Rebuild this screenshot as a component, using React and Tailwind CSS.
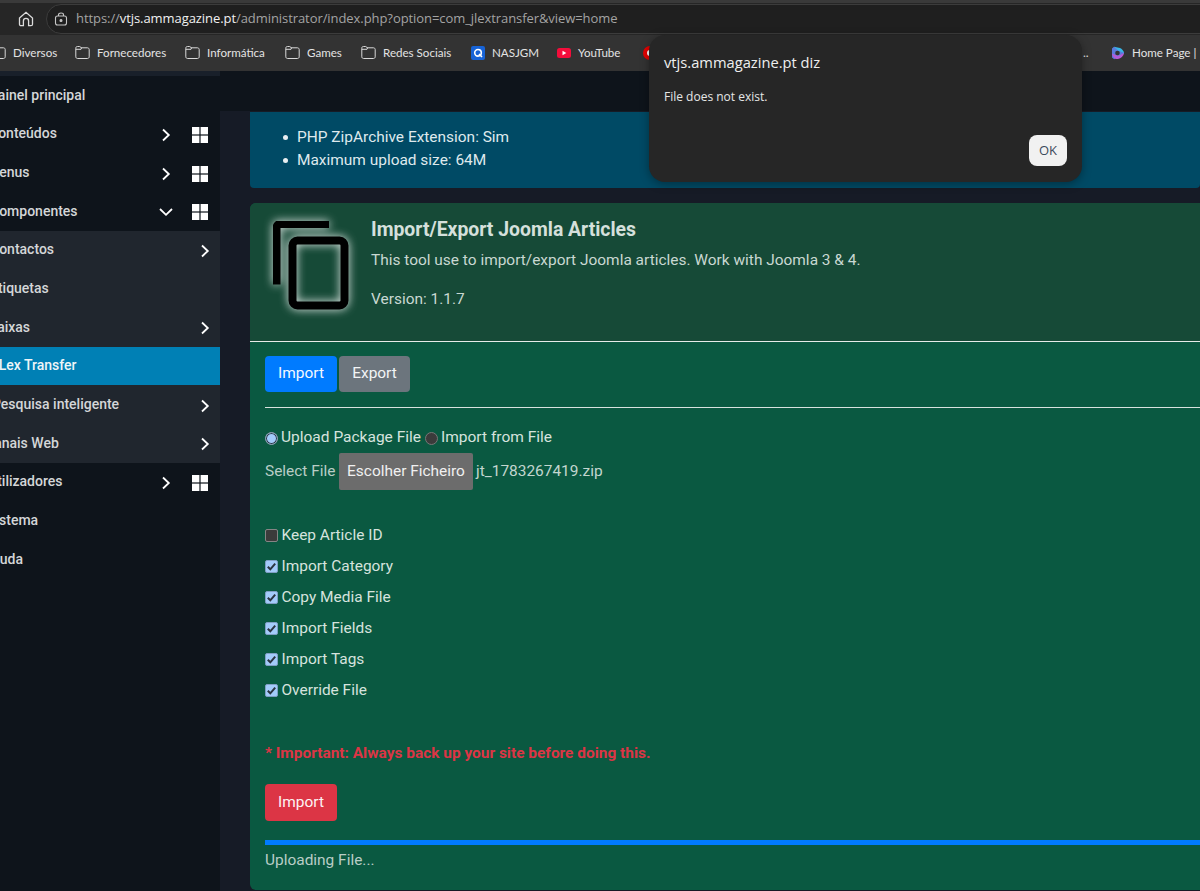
import React from "react";

const Folder = () => (
  <svg width="15" height="15" viewBox="0 0 15 15" fill="none" stroke="#d9d9d9" strokeWidth="1" className="shrink-0">
    <path d="M.8 3.300C.8 2 1.400 1.500 2.400 1.500h2.300c.7 0 1 .6 1.300 1.300h6.400c1 0 1.800.7 1.800 1.700v7.300c0 1-.8 1.700-1.800 1.700H2.600c-1 0-1.800-.7-1.800-1.700z" />
    <path d="M.8 4.300H6l.6-1.500" />
  </svg>
);

const GridIcon = () => (
  <svg width="16" height="16" viewBox="0 0 16 16" fill="#fff" className="shrink-0">
    <rect x="0" y="0" width="7.400" height="7.400" />
    <rect x="8.600" y="0" width="7.400" height="7.400" />
    <rect x="0" y="8.600" width="7.400" height="7.400" />
    <rect x="8.600" y="8.600" width="7.400" height="7.400" />
  </svg>
);

const ChevronRight = () => (
  <svg width="10" height="14" viewBox="0 0 10 14" fill="none" stroke="#fff" strokeWidth="1.800" className="shrink-0">
    <path d="M2 1.500 7.800 7 2 12.500" />
  </svg>
);

const ChevronDown = () => (
  <svg width="14" height="10" viewBox="0 0 14 10" fill="none" stroke="#fff" strokeWidth="1.800" className="shrink-0">
    <path d="M1 2 7 7.800 13 2" />
  </svg>
);

function Row({ label, shift, kind, sub, active }) {
  const bg = active ? "bg-[#0080b5]" : sub ? "bg-[#20262e]" : "";
  return (
    <div className={`h-[38.67px] flex items-center ${bg}`}>
      <span
        className={`flex-1 whitespace-nowrap text-[14px] font-medium ${active ? "text-[#eef5f8]" : "text-[#d4d6d8]"}`}
        style={{ marginLeft: shift }}
      >
        {label}
      </span>
      {kind === "sub" && (
        <div className="mr-[10px] pt-[2px]">
          <ChevronRight />
        </div>
      )}
    </div>
  );
}

function ParentRow({ label, shift, open }) {
  return (
    <div className="h-[38.67px] flex items-center">
      <span className="flex-1 whitespace-nowrap text-[14px] font-medium text-[#d4d6d8]" style={{ marginLeft: shift }}>
        {label}
      </span>
      <div className="w-[14px] flex justify-center mr-[19px] pt-[2px]">{open ? <ChevronDown /> : <ChevronRight />}</div>
      <div className="mr-[12px] pt-[2px]">
        <GridIcon />
      </div>
    </div>
  );
}

function Checkbox({ checked }) {
  return checked ? (
    <span className="w-[13px] h-[13px] rounded-[2px] bg-[#a3cbfa] border border-[#7f9ec4] flex items-center justify-center shrink-0">
      <svg width="11" height="11" viewBox="0 0 11 11" fill="none" stroke="#2b3440" strokeWidth="2">
        <path d="M1.800 5.800 4.300 8.300 9.200 2.600" />
      </svg>
    </span>
  ) : (
    <span className="w-[13px] h-[13px] rounded-[2px] bg-[#3b3b3b] border border-[#858585] shrink-0" />
  );
}

function CheckRow({ label, checked }) {
  return (
    <div className="h-[31px] flex items-center gap-[3.500px] text-[15.45px] text-[#d6e3de]">
      <Checkbox checked={checked} />
      <span>{label}</span>
    </div>
  );
}

function Bookmark({ w, icon, label }) {
  return (
    <div className="flex items-center gap-[7px] shrink-0" style={{ width: w }}>
      {icon}
      <span className="text-[11.6px] text-[#e3e3e3] whitespace-nowrap">{label}</span>
    </div>
  );
}

export default function App() {
  return (
    <div className="relative w-[1200px] h-[891px] overflow-hidden bg-[#161b26] font-['Roboto',sans-serif]">
      {/* Browser chrome */}
      <div className="h-[35px] bg-[#262626] border-t-[3px] border-[#3a3a3a] flex items-center pl-[18px] gap-[10px] font-['Open_Sans',sans-serif]">
        <svg width="16" height="16" viewBox="0 0 16 16" fill="none" stroke="#dcdcdc" strokeWidth="1.300" className="shrink-0 mr-[2px]">
          <path d="M1.500 7 8 1.300 14.500 7v6.200c0 .9-.6 1.500-1.500 1.500h-2.400V10c0-1.500-1-2.600-2.600-2.600S5.400 8.500 5.400 10v4.700H3c-.9 0-1.500-.6-1.500-1.500z" />
        </svg>
        <div className="flex-1 h-[30px] -mr-[40px] rounded-full bg-[#1f1f1f] border border-[#3c3c3c] flex items-center pl-[7px] gap-[8px]">
          <svg width="14" height="14" viewBox="0 0 14 14" fill="none" stroke="#c6c6c6" strokeWidth="1.100" className="shrink-0">
            <rect x="1.500" y="4" width="11" height="9" rx="2" />
            <path d="M4.500 4V2.800C4.500 1.600 5.500 1 7 1s2.500.6 2.500 1.800V4" />
            <circle cx="7" cy="8.500" r="1" fill="#c6c6c6" />
          </svg>
          <span className="text-[13px] whitespace-nowrap tracking-[-0.07px] text-[#a3a3a3]">
            https://<span className="text-[#f1f1f1]">vtjs.ammagazine.pt</span>/administrator/index.php?option=com_jlextransfer&amp;view=home
          </span>
        </div>
      </div>
      <div className="h-[36px] bg-[#333333] flex items-center -ml-[9px] font-['Lato',sans-serif] overflow-hidden">
        <Bookmark w={84} icon={<Folder />} label="Diversos" />
        <Bookmark w={110} icon={<Folder />} label="Fornecedores" />
        <Bookmark w={100} icon={<Folder />} label="Informática" />
        <Bookmark w={76} icon={<Folder />} label="Games" />
        <Bookmark w={110} icon={<Folder />} label="Redes Sociais" />
        <Bookmark
          w={86}
          label="NASJGM"
          icon={
            <svg width="14" height="14" viewBox="0 0 14 14" className="shrink-0">
              <rect width="14" height="14" rx="2" fill="#1763d6" />
              <circle cx="7" cy="6.800" r="3.300" fill="none" stroke="#fff" strokeWidth="1.600" />
              <path d="M8 8l3 3" stroke="#fff" strokeWidth="1.600" />
            </svg>
          }
        />
        <Bookmark
          w={86}
          label="YouTube"
          icon={
            <svg width="14" height="14" viewBox="0 0 14 14" className="shrink-0">
              <rect y="2" width="14" height="10" rx="2.500" fill="#f40d3b" />
              <path d="M5.500 4.800v4.400L9.300 7z" fill="#fff" />
            </svg>
          }
        />
        <div className="w-[440px] shrink-0">
          <svg width="14" height="14" viewBox="0 0 14 14">
            <circle cx="7" cy="7" r="7" fill="#e60000" />
            <circle cx="7" cy="7" r="3" fill="#fff" />
          </svg>
        </div>
        <span className="w-[28px] shrink-0 text-[12px] text-[#e3e3e3]">..</span>
        <Bookmark
          w={120}
          label="Home Page |"
          icon={
            <svg width="14" height="14" viewBox="0 0 14 14" className="shrink-0">
              <path d="M3 .8 12.800 6 13 8 3.200 13.300 1 11.500V2.500z" fill="#5b7bdc" />
              <path d="M3 .8 9 2c2 1 3.500 2.500 4 5L7 4.500z" fill="#38b6e8" />
              <path d="M1 7.500 7 10l6-3c-.5 3-3 5.500-6 6-2.500.5-5.500-2-6-5.500z" fill="#b45bd6" />
              <circle cx="6.500" cy="7" r="2.300" fill="#333" />
            </svg>
          }
        />
      </div>

      <div className="flex h-[820px]">
        {/* Sidebar */}
        <aside className="w-[220px] shrink-0 bg-[#0e141b] overflow-hidden">
          <div className="h-[5px] bg-[#19202a]" />
          <Row label="Painel principal" shift={-11} />
          <ParentRow label="Conteúdos" shift={-11} />
          <ParentRow label="Menus" shift={-13} />
          <ParentRow open label="Componentes" shift={-10} />
          <Row sub kind="sub" label="Contactos" shift={-10} />
          <Row sub label="Etiquetas" shift={-10} />
          <Row sub kind="sub" label="Caixas" shift={-12} />
          <Row active label="JLex Transfer" shift={-9} />
          <Row sub kind="sub" label="Pesquisa inteligente" shift={-8} />
          <Row sub kind="sub" label="Canais Web" shift={-15} />
          <ParentRow label="Utilizadores" shift={-12} />
          <Row label="Sistema" shift={-13} />
          <Row label="Ajuda" shift={-13} />
        </aside>

        {/* Main */}
        <main className="flex-1 min-w-0">
          <div className="h-[40px] bg-[#0e141b]" />
          <div className="pl-[30px] pt-[1px]">
            <div className="h-[76px] rounded-b-[4px] bg-[#004a65] pl-[47px] pt-[14px] text-[15.45px] leading-[23px] text-[#dfe9ed]">
              <ul>
                <li className="relative before:content-[''] before:absolute before:-left-[14px] before:top-[9px] before:w-[5px] before:h-[5px] before:rounded-full before:bg-[#e8eef1]">
                  PHP ZipArchive Extension: Sim
                </li>
                <li className="relative before:content-[''] before:absolute before:-left-[14px] before:top-[9px] before:w-[5px] before:h-[5px] before:rounded-full before:bg-[#e8eef1]">
                  Maximum upload size: 64M
                </li>
              </ul>
            </div>

            <section className="mt-[15px] h-[687px] rounded-l-[6px] overflow-hidden bg-[#0a5941]">
              <header className="h-[138px] bg-[#164a37] flex border-b border-[#e6ebe9] box-content">
                <div className="w-[121px] shrink-0 pl-[23px] pt-[18px]">
                  <svg width="76" height="90" viewBox="0 0 76 90" fill="none" className="drop-shadow-[0_0_5px_rgba(255,255,255,0.9)]">
                    <path d="M56 3.500H7.500C5 3.500 3.500 5 3.500 7.500V64" stroke="#000" strokeWidth="8" transform="translate(0 -0.500)" />
                    <rect x="19.500" y="19.500" width="52" height="65" rx="5" stroke="#000" strokeWidth="8" />
                  </svg>
                </div>
                <div className="pt-[14px]">
                  <h1 className="text-[19.4px] leading-[26px] font-bold text-[#d5e0dc]">Import/Export Joomla Articles</h1>
                  <p className="mt-[5px] text-[15.45px] leading-[24px] text-[#c9d8d2]">
                    This tool use to import/export Joomla articles. Work with Joomla 3 &amp; 4.
                  </p>
                  <p className="mt-[15px] text-[15.45px] leading-[24px] text-[#c9d8d2]">Version: 1.1.7</p>
                </div>
              </header>

              <div className="pl-[15px] pt-[14px]">
                <div className="flex gap-[2px]">
                  <button className="w-[72px] h-[36px] rounded-[4px] bg-[#007bff] text-[15.45px] text-[#f4f8ff]">Import</button>
                  <button className="w-[71px] h-[36px] rounded-[4px] bg-[#6c757d] text-[15.45px] text-[#f2f4f5]">Export</button>
                </div>
                <div className="mt-[15px] h-px bg-[#d8e2de]" />
                <div className="mt-[18px] h-[24px] flex items-center text-[15.5px] text-[#d6e3de]">
                  <span className="w-[13px] h-[13px] rounded-full border border-[#8d9dae] bg-[#a3cbfa] ring-1 ring-inset ring-[#2b3a4a] shrink-0" />
                  <span className="ml-[3px]">Upload Package File</span>
                  <span className="ml-[4px] w-[13px] h-[13px] rounded-full bg-[#3b3b3b] border border-[#777] shrink-0" />
                  <span className="ml-[3px]">Import from File</span>
                </div>
                <div className="mt-[3px] h-[37px] flex items-center text-[15.45px] text-[#b9cdc6]">
                  <span className="w-[74px]">Select File</span>
                  <span className="w-[134px] h-[37px] rounded-[2px] bg-[#6c6c6c] flex items-center justify-center text-[#f0f0f0]">
                    Escolher Ficheiro
                  </span>
                  <span className="ml-[3px] text-[#c3d6cf]">jt_1783267419.zip</span>
                </div>
                <div className="mt-[30px]">
                  <CheckRow label="Keep Article ID" />
                  <CheckRow checked label="Import Category" />
                  <CheckRow checked label="Copy Media File" />
                  <CheckRow checked label="Import Fields" />
                  <CheckRow checked label="Import Tags" />
                  <CheckRow checked label="Override File" />
                </div>
                <p className="mt-[35px] h-[24px] leading-[24px] text-[15.45px] font-bold text-[#dc3545]">
                  * Important: Always back up your site before doing this.
                </p>
                <button className="mt-[19px] w-[72px] h-[37px] rounded-[4px] bg-[#dc3545] text-[15.45px] text-[#fdf3f4]">Import</button>
                <div className="mt-[19px] h-[5px] bg-[#007bff]" />
                <p className="mt-[3px] text-[15.45px] leading-[24px] text-[#b9cdc6]">Uploading File...</p>
              </div>
            </section>
          </div>
        </main>
      </div>

      {/* Alert dialog */}
      <div className="absolute left-[649px] top-[35px] w-[433px] h-[147px] rounded-[16px] bg-[#262626] shadow-[0_2px_10px_rgba(0,0,0,0.35)] font-['Open_Sans',sans-serif]">
        <p className="absolute left-[15px] top-[17px] text-[14.7px] leading-[20px] text-[#eeeeee]">vtjs.ammagazine.pt diz</p>
        <p className="absolute left-[15px] top-[53px] text-[12px] leading-[18px] text-[#e6e6e6]">File does not exist.</p>
        <button className="absolute left-[380px] top-[100px] w-[38px] h-[31px] rounded-[8px] bg-[#f1f1f1] text-[13px] text-[#3c4a5c]">OK</button>
      </div>
    </div>
  );
}
